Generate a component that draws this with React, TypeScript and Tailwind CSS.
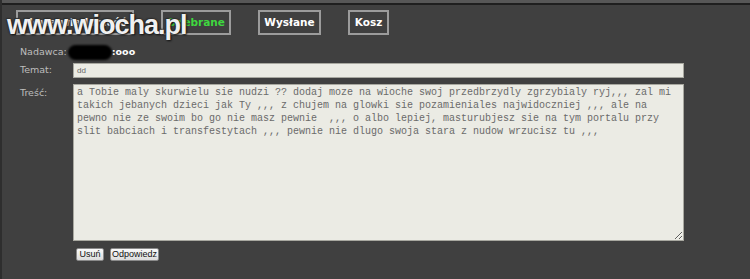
import React from "react";

const tabs = [
  { label: "Nowa wiadomość", w: "w-[118px]", active: false },
  { label: "Odebrane", w: "w-[70px]", active: true },
  { label: "Wysłane", w: "w-[63px]", active: false },
  { label: "Kosz", w: "w-[41px]", active: false },
];

const body = [
  "a Tobie maly skurwielu sie nudzi ?? dodaj moze na wioche swoj przedbrzydly zgrzybialy ryj,,, zal mi",
  "takich jebanych dzieci jak Ty ,,, z chujem na glowki sie pozamieniales najwidoczniej ,,, ale na",
  "pewno nie ze swoim bo go nie masz pewnie  ,,, o albo lepiej, masturubjesz sie na tym portalu przy",
  "slit babciach i transfestytach ,,, pewnie nie dlugo swoja stara z nudow wrzucisz tu ,,,",
].join("\n");

export default function App() {
  return (
    <div className="relative w-[750px] h-[279px] overflow-hidden bg-[#404040] font-['DejaVu_Sans',sans-serif] border-l-[2px] border-[#2e2e2e]">
      {/* top strip */}
      <div className="h-[3px] bg-[#575757]" />
      <div className="h-[2px] bg-[#1f1f1f]" />

      {/* tabs */}
      <div className="flex gap-[27px] pl-[14px] mt-[5px]">
        {tabs.map((t) => (
          <div
            key={t.label}
            className={`${t.w} h-[25px] flex items-center justify-center border-2 border-[#9c9c9c] text-[10.5px] font-bold whitespace-nowrap overflow-hidden ${
              t.active ? "text-[#3fd83f]" : "text-white"
            }`}
          >
            {t.label}
          </div>
        ))}
      </div>

      {/* sender */}
      <div className="flex items-center h-[16px] mt-[9px] pl-[18px]">
        <span className="text-[9.5px] text-[#bdbdbd]">Nadawca:</span>
        <span className="ml-[1px] w-[44px] h-[15px] rounded-full bg-black blur-[1px]" />
        <span className="text-[9.5px] font-bold text-white">:ooo</span>
      </div>

      {/* subject */}
      <div className="flex items-center mt-[3px] pl-[18px]">
        <span className="w-[53px] text-[9.5px] text-[#bdbdbd]">Temat:</span>
        <div className="w-[611px] h-[15px] bg-[#ebebe4] border border-[#a8a8a0] flex items-center pl-[3px] text-[8px] text-[#666] font-['Liberation_Sans',sans-serif]">
          dd
        </div>
      </div>

      {/* body */}
      <div className="flex items-start mt-[6px] pl-[18px]">
        <span className="w-[53px] text-[9.5px] text-[#bdbdbd] mt-[2px]">Treść:</span>
        <textarea
          readOnly
          wrap="off"
          value={body}
          className="w-[611px] h-[157px] bg-[#ebebe4] border border-[#a8a8a0] pt-[1px] pl-[3px] text-[10px] leading-[13px] text-[#6a6a6a] font-['Liberation_Mono',monospace] overflow-hidden outline-none"
        />
      </div>

      {/* buttons */}
      <div className="flex gap-[6px] mt-[7px] pl-[74px]">
        <button className="w-[28px] h-[13px] flex items-center justify-center bg-gradient-to-b from-[#fafafa] to-[#dcdcdc] border border-[#8a8a8a] rounded-[2px] text-[9px] leading-none text-[#111] font-['Liberation_Sans',sans-serif]">
          Usuń
        </button>
        <button className="w-[49px] h-[13px] flex items-center justify-center bg-gradient-to-b from-[#fafafa] to-[#dcdcdc] border border-[#8a8a8a] rounded-[2px] text-[9px] leading-none text-[#111] font-['Liberation_Sans',sans-serif]">
          Odpowiedz
        </button>
      </div>

      {/* watermark */}
      <div className="absolute left-[5px] top-[12px] text-[27px] leading-none font-bold tracking-[-1px] text-[#f0f0f0] font-['Liberation_Sans',sans-serif] [text-shadow:0_0_2px_#222,1px_1px_2px_#111,-1px_-1px_1px_#333] pointer-events-none">
        www.wiocha.pl
      </div>
    </div>
  );
}
